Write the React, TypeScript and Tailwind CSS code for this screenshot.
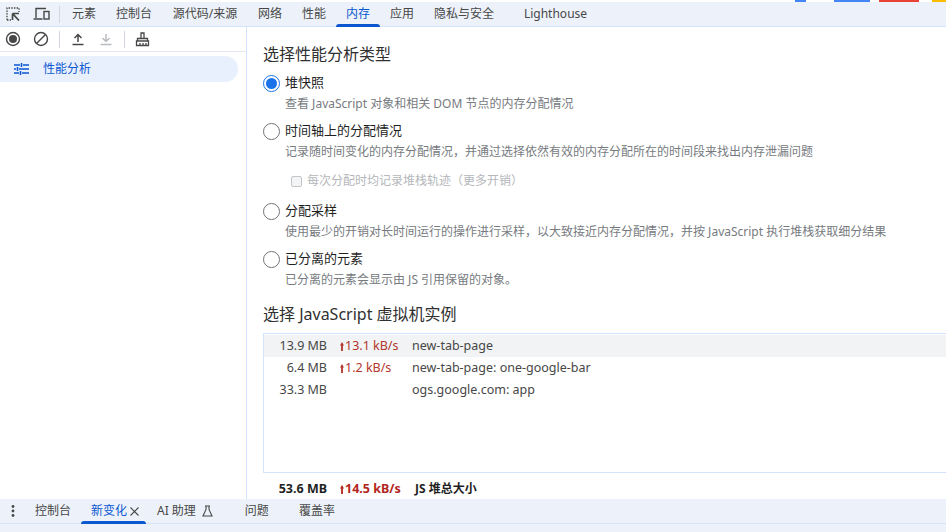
import React from "react";

const font = { fontFamily: '"Noto Sans", "Noto Sans CJK SC", sans-serif' };

const topTabs = [
  { label: "元素", w: "w-[44px]" },
  { label: "控制台", w: "w-[56px]" },
  { label: "源代码/来源", w: "w-[86px]" },
  { label: "网络", w: "w-[44px]" },
  { label: "性能", w: "w-[44px]" },
  { label: "内存", w: "w-[44px]", active: true },
  { label: "应用", w: "w-[44px]" },
  { label: "隐私与安全", w: "w-[80px]" },
  { label: "Lighthouse", w: "w-[103px]" },
];

function Radio({ checked }: { checked?: boolean }) {
  if (checked) {
    return (
      <span className="flex h-[17px] w-[17px] shrink-0 items-center justify-center rounded-full border-[1.5px] border-[#1a73e8] bg-white">
        <span className="h-[11px] w-[11px] rounded-full bg-[#1a73e8]" />
      </span>
    );
  }
  return <span className="h-[17px] w-[17px] shrink-0 rounded-full border-[1.5px] border-[#70757a] bg-white" />;
}

function Option({ title, desc, checked, className }: { title: string; desc: string; checked?: boolean; className?: string }) {
  return (
    <div className={className}>
      <div className="flex h-[18px] items-center gap-[5px]">
        <Radio checked={checked} />
        <span className="text-[13px] text-[#1f1f1f]">{title}</span>
      </div>
      <div className="mt-[3px] ml-[22px] h-[18px] whitespace-nowrap text-[12px] leading-[18px] text-[#777b80]">{desc}</div>
    </div>
  );
}

function UpArrow() {
  return (
    <svg className="mr-[1px] h-[9px] w-[4px] shrink-0" viewBox="0 0 4 9" fill="currentColor">
      <path d="M2 0l2 3.5H2.9V9H1.1V3.5H0z" />
    </svg>
  );
}

function Row({ size, rate, name, highlight }: { size: string; rate?: string; name: string; highlight?: boolean }) {
  return (
    <div className={`flex h-[22px] items-center text-[12.5px] ${highlight ? "bg-[#f1f3f4]" : ""}`}>
      <span className="w-[63px] text-right text-[#474747]">{size}</span>
      <span className="ml-[13px] flex w-[72px] items-center text-[#b3362e]">
        {rate && <UpArrow />}
        {rate}
      </span>
      <span className="text-[#474747]">{name}</span>
    </div>
  );
}

export default function App() {
  return (
    <div className="flex h-[532px] w-[946px] flex-col overflow-hidden bg-white" style={font}>
      {/* strip of the page above devtools */}
      <div className="flex h-[2px] shrink-0 bg-white">
        <span className="ml-[795px] w-[11px] bg-[#4285f4]" />
        <span className="ml-[28px] w-[36px] bg-[#4285f4]" />
        <span className="ml-[9px] w-[40px] bg-[#ea4335]" />
        <span className="ml-[13px] w-[14px] bg-[#fbbc04]" />
      </div>

      {/* main tabs */}
      <div className="flex h-[25px] shrink-0 items-center border-b border-[#d3e3fd] bg-[#edf2fa]">
        <svg className="ml-[6px] h-[14px] w-[14px] text-[#474747]" viewBox="0 0 14 14" fill="none">
          <path d="M1 13V1h12v4M1 13h4" stroke="currentColor" strokeWidth="1.3" strokeDasharray="1.5 1.2" />
          <path d="M6.5 6.5h6.5M6.5 6.5v6.5M6.8 6.8L13 13.5" stroke="currentColor" strokeWidth="1.7" />
        </svg>
        <svg className="ml-[13px] h-[14px] w-[17px] text-[#474747]" viewBox="0 0 17 14" fill="none" stroke="currentColor" strokeWidth="1.4">
          <path d="M3 11V1.5h10M0.5 12h9" />
          <rect x="11" y="4.5" width="5" height="7.5" />
        </svg>
        <span className="ml-[9px] h-[17px] w-px bg-[#d3d8df]" />
        <div className="ml-[2px] flex h-full">
          {topTabs.map((t) => (
            <div
              key={t.label}
              className={`relative flex ${t.w} items-center justify-center text-[12px] ${t.active ? "text-[#0b57d0]" : "text-[#474747]"}`}
            >
              {t.label}
              {t.active && <span className="absolute bottom-[-1px] left-0 right-0 h-[3px] rounded-t-[3px] bg-[#0b57d0]" />}
            </div>
          ))}
        </div>
      </div>

      <div className="flex min-h-0 flex-1">
        {/* sidebar */}
        <div className="flex w-[247px] shrink-0 flex-col border-r border-[#d3e3fd]">
          <div className="flex h-[25px] shrink-0 items-center border-b border-[#e3e7ed]">
            <svg className="ml-[5px] h-[16px] w-[16px] text-[#474747]" viewBox="0 0 16 16" fill="none">
              <circle cx="8" cy="8" r="6.5" stroke="currentColor" strokeWidth="1.4" />
              <circle cx="8" cy="8" r="4" fill="currentColor" />
            </svg>
            <svg className="ml-[12px] h-[16px] w-[16px] text-[#474747]" viewBox="0 0 16 16" fill="none" stroke="currentColor" strokeWidth="1.4">
              <circle cx="8" cy="8" r="6.5" />
              <path d="M3.5 12.5l9-9" />
            </svg>
            <span className="ml-[10px] h-[17px] w-px bg-[#d3d8df]" />
            <svg className="ml-[11px] h-[16px] w-[14px] text-[#474747]" viewBox="0 0 14 16" fill="none" stroke="currentColor" strokeWidth="1.5">
              <path d="M7 11V3.5M3.5 7L7 3.5 10.5 7M1.5 13.5h11" />
            </svg>
            <svg className="ml-[14px] h-[16px] w-[14px] text-[#b9bcc0]" viewBox="0 0 14 16" fill="none" stroke="currentColor" strokeWidth="1.5">
              <path d="M7 3v7.5M3.5 7L7 10.5 10.5 7M1.5 13.5h11" />
            </svg>
            <span className="ml-[11px] h-[17px] w-px bg-[#d3d8df]" />
            <svg className="ml-[10px] h-[16px] w-[15px] text-[#474747]" viewBox="0 0 15 16" fill="none" stroke="currentColor" strokeWidth="1.3">
              <path d="M6 7V2h3v5M2.5 7.5h10V10h-10zM1.5 14.5V10h12v4.5zM5 12v2.5M8 12v2.5M11 12v2.5" />
            </svg>
          </div>
          <div className="mt-[4px] flex h-[26px] w-[238px] items-center rounded-r-full bg-[#e9f0fd] text-[#0b57d0]">
            <svg className="ml-[14px] h-[14px] w-[15px]" viewBox="0 0 15 14" fill="none" stroke="currentColor" strokeWidth="1.6">
              <path d="M0 3h6M9 3h6M0 7h2M5 7h10M0 11h5M8 11h7M7.5 1v4M3.5 5v4M6.5 9v4" />
            </svg>
            <span className="ml-[14px] text-[12px]">性能分析</span>
          </div>
        </div>

        {/* content */}
        <div className="min-w-0 flex-1 pl-[16px]">
          <div className="mt-[15px] text-[16px] leading-[24px] text-[#303030]">选择性能分析类型</div>
          <Option className="mt-[8px]" checked title="堆快照" desc="查看 JavaScript 对象和相关 DOM 节点的内存分配情况" />
          <Option className="mt-[9px]" title="时间轴上的分配情况" desc="记录随时间变化的内存分配情况，并通过选择依然有效的内存分配所在的时间段来找出内存泄漏问题" />
          <div className="mt-[11px] ml-[28px] flex h-[18px] items-center gap-[5px] text-[12px] text-[#b4b7bb]">
            <span className="h-[11px] w-[11px] rounded-[2px] border border-[#c4c7c9] bg-[#f3f4f5]" />
            每次分配时均记录堆栈轨迹（更多开销）
          </div>
          <Option className="mt-[12px]" title="分配采样" desc="使用最少的开销对长时间运行的操作进行采样，以大致接近内存分配情况，并按 JavaScript 执行堆栈获取细分结果" />
          <Option className="mt-[9px]" title="已分离的元素" desc="已分离的元素会显示由 JS 引用保留的对象。" />

          <div className="mt-[13px] text-[16px] leading-[24px] text-[#303030]">选择 JavaScript 虚拟机实例</div>
          <div className="mt-[7px] h-[140px] border-y border-l border-[#d3e3fd] pt-[1px]">
            <Row highlight size="13.9 MB" rate="13.1 kB/s" name="new-tab-page" />
            <Row size="6.4 MB" rate="1.2 kB/s" name="new-tab-page: one-google-bar" />
            <Row size="33.3 MB" name="ogs.google.com: app" />
          </div>
          <div className="flex h-[25px] items-center pt-[7px] text-[12.5px] font-bold">
            <span className="w-[64px] text-right text-[#1f1f1f]">53.6 MB</span>
            <span className="ml-[13px] flex w-[75px] items-center text-[#b3261e]">
              <UpArrow />
              14.5 kB/s
            </span>
            <span className="text-[12px] text-[#1f1f1f]">JS 堆总大小</span>
          </div>
        </div>
      </div>

      {/* drawer tabs */}
      <div className="flex h-[25px] shrink-0 items-center border-b border-[#d3e3fd] bg-[#edf2fa] text-[12px] text-[#474747]">
        <svg className="ml-[11px] h-[12px] w-[4px]" viewBox="0 0 4 12" fill="currentColor">
          <circle cx="2" cy="1.5" r="1.4" />
          <circle cx="2" cy="6" r="1.4" />
          <circle cx="2" cy="10.5" r="1.4" />
        </svg>
        <span className="ml-[20px] w-[46px]">控制台</span>
        <div className="relative flex h-full w-[65px] items-center pl-[10px] text-[#0b57d0]">
          新变化
          <svg className="ml-[3px] h-[9px] w-[9px] text-[#474747]" viewBox="0 0 9 9" stroke="currentColor" strokeWidth="1.1">
            <path d="M0.5 0.5l8 8M8.5 0.5l-8 8" />
          </svg>
          <span className="absolute bottom-[-1px] left-0 right-0 h-[3px] rounded-t-[3px] bg-[#0b57d0]" />
        </div>
        <span className="ml-[11px]">AI 助理</span>
        <svg className="ml-[6px] h-[12px] w-[11px]" viewBox="0 0 11 12" fill="none" stroke="currentColor" strokeWidth="1.1">
          <path d="M3 1h5M4 1v3.5L1 11h9L7 4.5V1" />
        </svg>
        <span className="ml-[32px]">问题</span>
        <span className="ml-[30px]">覆盖率</span>
      </div>
      <div className="h-[8px] shrink-0 bg-[#edf2fa]" />
    </div>
  );
}
